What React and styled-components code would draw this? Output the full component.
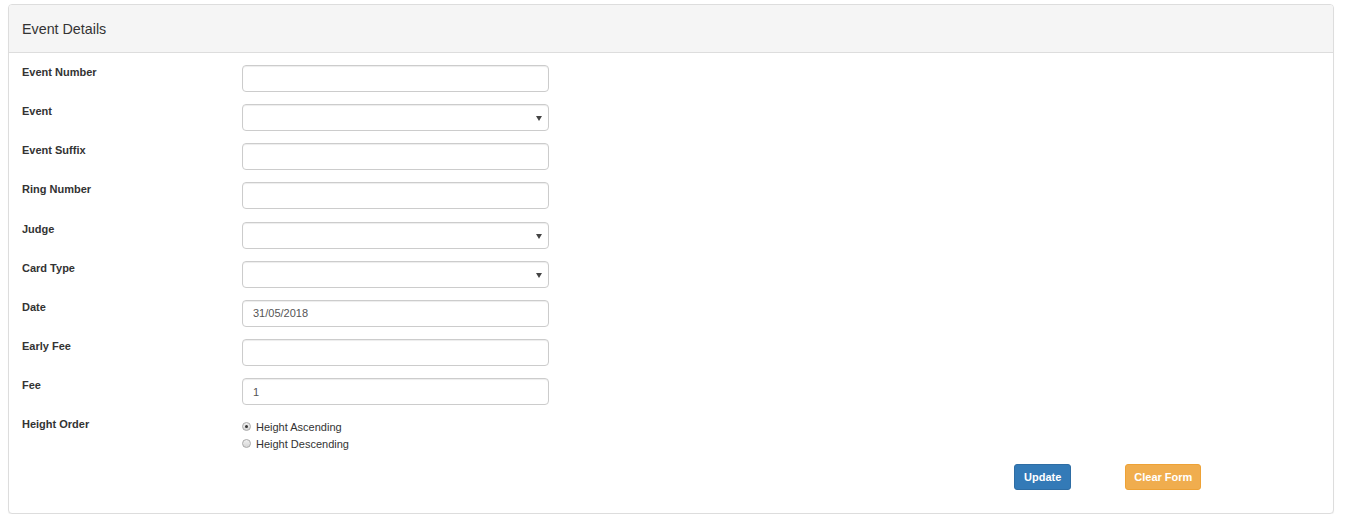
import React from "react";
import styled, { createGlobalStyle } from "styled-components";

const Global = createGlobalStyle`
  html, body { margin: 0; padding: 0; background: #fff; }
  body { font-family: "Liberation Sans", Arial, sans-serif; color: #333; }
  * { box-sizing: border-box; }
`;

const Page = styled.div`
  padding: 4px 11px 0 8px;
`;

const Panel = styled.div`
  border: 1px solid #ddd;
  border-radius: 4px;
  background: #fff;
  box-shadow: 0 1px 1px rgba(0,0,0,0.05);
  overflow: hidden;
`;

const Heading = styled.div`
  height: 48px;
  background: #f5f5f5;
  border-bottom: 1px solid #ddd;
  display: flex;
  align-items: center;
  padding: 0 13px;
  font-size: 14.3px;
  color: #333;
`;

const Body = styled.div`
  padding: 12px 13px 23px 13px;
`;

const Row = styled.div`
  display: grid;
  grid-template-columns: 220px 307px;
  align-items: start;
  height: ${p => p.$h || "39.125px"};
`;

const Label = styled.label`
  font-size: 11px;
  font-weight: bold;
  line-height: 15px;
  color: #333;
`;

const Input = styled.input`
  width: 307px;
  height: 27px;
  border: 1px solid #ccc;
  border-radius: 4px;
  padding: 0 10px;
  font-family: "Liberation Sans", Arial, sans-serif;
  font-size: 11px;
  color: #555;
  background: #fff;
  box-shadow: inset 0 1px 1px rgba(0,0,0,0.075);
  outline: none;
`;

const SelectBox = styled.div`
  position: relative;
  width: 307px;
  height: 27px;
  border: 1px solid #ccc;
  border-radius: 4px;
  background: #fff;
  box-shadow: inset 0 1px 1px rgba(0,0,0,0.075);
`;

const Arrow = styled.span`
  position: absolute;
  right: 6px;
  top: 11px;
  width: 0;
  height: 0;
  border-left: 3px solid transparent;
  border-right: 3px solid transparent;
  border-top: 5px solid #444;
`;

const RadioGroup = styled.div`
  display: flex;
  flex-direction: column;
  padding-top: 1px;
`;

const RadioLine = styled.label`
  display: flex;
  align-items: center;
  height: 17px;
  font-size: 11px;
  color: #333;
  gap: 5px;
`;

const RadioDot = styled.span`
  width: 9px;
  height: 9px;
  border-radius: 50%;
  border: 1px solid #a9a9a9;
  background: linear-gradient(#f0f0f0, #d6d6d6);
  display: flex;
  align-items: center;
  justify-content: center;
  &::after {
    content: "";
    width: 3px;
    height: 3px;
    border-radius: 50%;
    background: ${p => (p.$checked ? "#333" : "transparent")};
  }
`;

const ButtonRow = styled.div`
  display: flex;
  gap: 54px;
  padding-left: 992px;
  margin-top: 11px;
`;

const Button = styled.button`
  height: 26px;
  padding: 0 ${p => p.$px || 9}px;
  border-radius: 3px;
  border: 1px solid ${p => p.$border};
  background: ${p => p.$bg};
  color: #fff;
  font-family: "Liberation Sans", Arial, sans-serif;
  font-size: 11px;
  font-weight: bold;
  cursor: pointer;
`;

const fields = [
  { label: "Event Number", type: "text" },
  { label: "Event", type: "select" },
  { label: "Event Suffix", type: "text" },
  { label: "Ring Number", type: "text" },
  { label: "Judge", type: "select" },
  { label: "Card Type", type: "select" },
  { label: "Date", type: "text", value: "31/05/2018" },
  { label: "Early Fee", type: "text" },
  { label: "Fee", type: "text", value: "1" },
];

export default function App() {
  return (
    <>
      <Global />
      <Page>
        <Panel>
          <Heading>Event Details</Heading>
          <Body>
            {fields.map(f => (
              <Row key={f.label}>
                <Label>{f.label}</Label>
                {f.type === "select" ? (
                  <SelectBox>
                    <Arrow />
                  </SelectBox>
                ) : (
                  <Input defaultValue={f.value || ""} />
                )}
              </Row>
            ))}
            <Row $h="36px">
              <Label>Height Order</Label>
              <RadioGroup>
                <RadioLine>
                  <RadioDot $checked />
                  Height Ascending
                </RadioLine>
                <RadioLine>
                  <RadioDot />
                  Height Descending
                </RadioLine>
              </RadioGroup>
            </Row>
            <ButtonRow>
              <Button $bg="#337ab7" $border="#2e6da4">Update</Button>
              <Button $bg="#f0ad4e" $border="#eea236" $px={8}>Clear Form</Button>
            </ButtonRow>
          </Body>
        </Panel>
      </Page>
    </>
  );
}
